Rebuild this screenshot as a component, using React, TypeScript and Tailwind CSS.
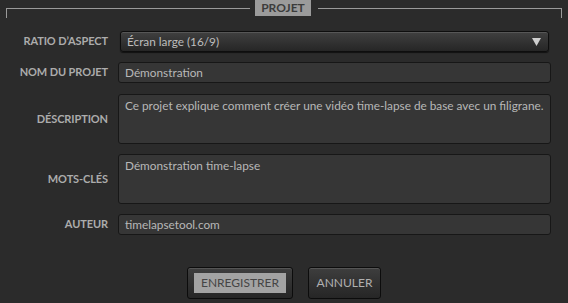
import { ReactNode } from "react";

const font = { fontFamily: "Lato, 'Noto Sans', sans-serif" };

function Row({ label, children }: { label: string; children: ReactNode }) {
  return (
    <div className="flex items-center">
      <div className="w-[108px] shrink-0 text-right text-[11px] font-bold tracking-[-0.1px] text-[#acacac]">
        {label}
      </div>
      <div className="ml-[10px] w-[433px]">{children}</div>
    </div>
  );
}

function Field({ value, tall = false }: { value: string; tall?: boolean }) {
  return (
    <div
      className={`overflow-hidden whitespace-nowrap rounded-[3px] border border-[#171717] bg-[#363636] px-[6px] text-[11.8px] text-[#b8b8b8] ${
        tall ? "h-[50px] pt-[3px] leading-[16px]" : "flex h-[21px] items-center"
      }`}
    >
      {value}
    </div>
  );
}

export default function App() {
  return (
    <div className="h-[303px] w-[568px] overflow-hidden bg-[#2b2b2b]" style={font}>
      <div className="flex items-start px-[6px]">
        <div className="mt-[8px] h-[10px] flex-1 border-l border-t border-[#9a9a9a]" />
        <div className="ml-[5px] mr-[7px] flex h-[16px] w-[56px] items-center justify-center bg-[#9b9b9b] text-[12px] font-bold text-[#3c3c3c]">
          PROJET
        </div>
        <div className="mt-[8px] h-[10px] flex-1 border-r border-t border-[#9a9a9a]" />
      </div>

      <div className="mt-[13px] flex flex-col gap-[10px]">
        <Row label="RATIO D’ASPECT">
          <div className="mx-[2px] flex h-[21px] items-center justify-between rounded-[3px] border border-[#0e0e0e] bg-gradient-to-b from-[#404040] to-[#262626] pl-[6px] pr-[7px] text-[11.8px] text-[#bdbdbd] shadow-[inset_0_1px_0_rgba(255,255,255,0.12),0_1px_1px_rgba(0,0,0,0.6)]">
            <span>Écran large (16/9)</span>
            <svg width="9" height="8" viewBox="0 0 9 8">
              <path d="M0 0 H9 L4.5 8 Z" fill="#cfcfcf" />
            </svg>
          </div>
        </Row>
        <Row label="NOM DU PROJET">
          <Field value="Démonstration" />
        </Row>
        <div className="mt-[1px] flex flex-col gap-[10px]">
          <Row label="DÉSCRIPTION">
            <Field tall value="Ce projet explique comment créer une vidéo time-lapse de base avec un filigrane." />
          </Row>
          <Row label="MOTS-CLÉS">
            <Field tall value="Démonstration time-lapse" />
          </Row>
          <Row label="AUTEUR">
            <Field value="timelapsetool.com" />
          </Row>
        </div>
      </div>

      <div className="mt-[32px] flex justify-center gap-[15px]">
        <button className="flex h-[32px] w-[106px] items-center justify-center rounded-[3px] border border-[#0c0c0c] bg-gradient-to-b from-[#3e3e3e] to-[#262626] shadow-[inset_0_1px_0_rgba(255,255,255,0.12)]">
          <span className="bg-[#a3a3a3] px-[7px] py-[1px] text-[12px] text-[#454545]">ENREGISTRER</span>
        </button>
        <button className="flex h-[32px] w-[73px] items-center justify-center rounded-[3px] border border-[#0c0c0c] bg-gradient-to-b from-[#3e3e3e] to-[#262626] text-[12px] text-[#b0b0b0] shadow-[inset_0_1px_0_rgba(255,255,255,0.12)]">
          ANNULER
        </button>
      </div>
    </div>
  );
}
